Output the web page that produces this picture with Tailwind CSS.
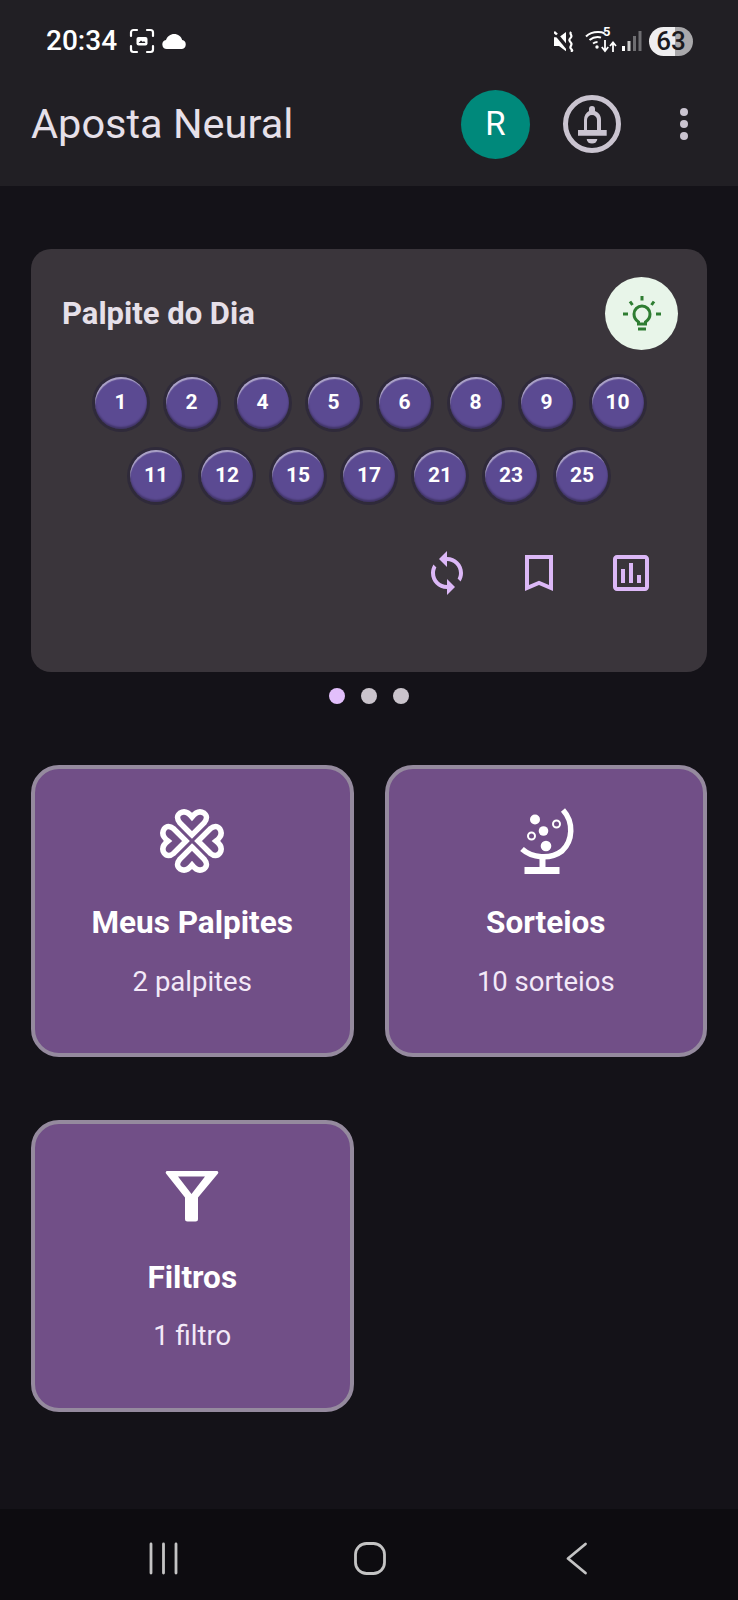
<!DOCTYPE html>
<html lang="pt">
<head>
<meta charset="utf-8">
<script src="https://cdn.jsdelivr.net/npm/@tailwindcss/browser@4"></script>
<title>Aposta Neural</title>
</head>
<body class="bg-[#141218]">
<div class="w-[738px] h-[1600px] flex flex-col font-['Roboto',sans-serif] overflow-hidden bg-[#141218]">

  <header class="h-[186px] bg-[#211f24] shrink-0 flex flex-col">
    <div class="h-[62px] pt-[20px] flex items-center pl-[46px] pr-[45px] text-white">
      <span class="text-[28px] font-medium leading-none">20:34</span>
      <svg class="ml-[12px]" width="26" height="26" viewBox="0 0 26 26" fill="none" stroke="#fff" stroke-width="2.2" stroke-linecap="round">
        <path d="M2 8V4.500A2.500 2.500 0 0 1 4.500 2H8M18 2h3.500A2.500 2.500 0 0 1 24 4.500V8M24 18v3.500a2.500 2.500 0 0 1-2.500 2.500H18M8 24H4.500A2.500 2.500 0 0 1 2 21.500V18"/>
        <rect x="7.500" y="9" width="11" height="8.500" rx="2" fill="#fff" stroke="none"/>
        <path d="M9.500 15l2.500-2.500 2 1.500 1-1 1.500 2z" fill="#211f24" stroke="none"/>
      </svg>
      <svg class="ml-[7px]" width="25" height="15" viewBox="0 0 25 15" fill="#fff"><path d="M5 15a4.600 4.600 0 0 1-1-9.100C5.200 2.500 8.400 0 12.200 0c3.800 0 7 2.500 8 6a4.600 4.600 0 0 1-.2 9z"/></svg>
      <div class="ml-auto flex items-center">
        <svg width="21" height="21" viewBox="0 0 21 24" preserveAspectRatio="none" fill="#fff">
          <path d="M0 7h5l7-6v22l-7-6H0z"/>
          <path d="M1 2l13 18" stroke="#211f24" stroke-width="3.500"/>
          <path d="M0 1l3 3" stroke="#fff" stroke-width="2.500"/>
          <path d="M17 1c-2 2.500 2 4-.2 6.500S15 11 17 13.500s-2 4-.2 6.500 2 2.500 0 3.500" fill="none" stroke="#fff" stroke-width="2.200"/>
        </svg>
        <div class="relative ml-[10px] w-[32px] h-[26px]">
          <svg class="absolute left-0 top-[2px]" width="23" height="20" viewBox="0 0 23 20" fill="none" stroke="#fff" stroke-width="2">
            <path d="M1 6.500C4 3.500 8 2 13 2c3 0 5 .500 6.500 1.300"/>
            <path d="M4.500 10C7 8 9.500 7 12.500 7c1.500 0 2.500.200 3.500.600"/>
            <path d="M8 13.500c1.500-1 3-1.500 4.500-1.500"/>
            <circle cx="12" cy="17" r="1.700" fill="#fff" stroke="none"/>
          </svg>
          <span class="absolute left-[18px] top-[-3px] text-[13px] font-bold leading-[14px] text-white">5</span>
          <svg class="absolute left-[15px] top-[12px]" width="17" height="13" viewBox="0 0 17 13" fill="none" stroke="#fff" stroke-width="1.800">
            <path d="M5 0v10M1.800 7l3.200 4 3.200-4"/><path d="M13 12V3M10 6l3-3.500 3 3.500"/>
          </svg>
        </div>
        <svg class="ml-[5px]" width="20" height="20" viewBox="0 0 20 20">
          <rect x="0" y="15" width="3" height="5" fill="#fff"/>
          <rect x="5.500" y="10" width="3" height="10" fill="#c9c9c9"/>
          <rect x="11" y="5" width="3" height="15" fill="#6f6e72"/>
          <rect x="16.500" y="0" width="3" height="20" fill="#6f6e72"/>
        </svg>
        <div class="ml-[7px] w-[44px] h-[29px] rounded-full bg-[linear-gradient(90deg,#efeef0_59%,#a9a8ab_59%)] flex items-center justify-center text-[26px] font-medium text-[#1b1a1e] leading-none">63</div>
      </div>
    </div>
    <div class="flex-1 flex items-center pl-[31px] pr-[50px]">
      <h1 class="text-[41.500px] font-normal leading-none text-[#e6e0e9]">Aposta Neural</h1>
      <div class="ml-auto w-[69px] h-[69px] rounded-full bg-[#00897b] flex items-center justify-center text-[33px] text-white">R</div>
      <div class="ml-[33px] w-[58px] h-[58px] rounded-full border-[5px] border-[#cac4d0] flex items-center justify-center">
        <svg width="48" height="48" viewBox="0 0 48 48" fill="#cac4d0"><path fill-rule="evenodd" d="M24 6a3 3 0 0 1 3 3v2c4 1.500 6 5 6 9v10h5.700v5.700H10V30h6V20c0-4 2-7.500 5-9V9a3 3 0 0 1 3-3zM19 30h10V20a5 5 0 0 0-10 0z"/><path d="M18.700 39h10.600a5.300 4.500 0 0 1-10.600 0z"/></svg>
      </div>
      <div class="ml-[59px] flex flex-col gap-[4px]">
        <span class="w-[8px] h-[8px] rounded-full bg-[#cac4d0]"></span>
        <span class="w-[8px] h-[8px] rounded-full bg-[#cac4d0]"></span>
        <span class="w-[8px] h-[8px] rounded-full bg-[#cac4d0]"></span>
      </div>
    </div>
  </header>

  <main class="flex-1 pt-[63px] px-[31px]">
    <section class="h-[423px] rounded-[20px] bg-[#3a353b] pt-[28px] pl-[31px] pr-[29px]">
      <div class="flex items-center justify-between h-[73px]">
        <h2 class="text-[31px] font-bold leading-none text-[#e6e0e9] -mt-[1px]">Palpite do Dia</h2>
        <div class="w-[73px] h-[73px] rounded-full bg-[#e8f5e9] flex items-center justify-center">
          <svg width="40" height="40" viewBox="0 0 40 40" fill="none" stroke="#2e7d32" stroke-width="3">
            <path d="M16.500 30v-2C13.500 26 12 23.500 12 20a8 8 0 1 1 16 0c0 3.500-1.500 6-4.500 8v2z"/>
            <path d="M16 35h8"/>
            <path d="M20 2v4.500M1 20h5M34 20h5M8 7.500l2.500 3.500M32 7.500L29.500 11"/>
          </svg>
        </div>
      </div>
      <div class="mt-[27px] flex flex-wrap justify-center gap-x-[19px] gap-y-[21px] pr-[2px]">
        <div class="w-[52px] h-[52px] rounded-full bg-[#5b4a92] flex items-center justify-center text-[21px] font-bold text-white shadow-[inset_1px_3px_1px_-1px_rgba(255,255,255,0.5),inset_0_-2px_2px_rgba(0,0,0,0.3),0_0_0_3px_#2f2a3a]">1</div>
        <div class="w-[52px] h-[52px] rounded-full bg-[#5b4a92] flex items-center justify-center text-[21px] font-bold text-white shadow-[inset_1px_3px_1px_-1px_rgba(255,255,255,0.5),inset_0_-2px_2px_rgba(0,0,0,0.3),0_0_0_3px_#2f2a3a]">2</div>
        <div class="w-[52px] h-[52px] rounded-full bg-[#5b4a92] flex items-center justify-center text-[21px] font-bold text-white shadow-[inset_1px_3px_1px_-1px_rgba(255,255,255,0.5),inset_0_-2px_2px_rgba(0,0,0,0.3),0_0_0_3px_#2f2a3a]">4</div>
        <div class="w-[52px] h-[52px] rounded-full bg-[#5b4a92] flex items-center justify-center text-[21px] font-bold text-white shadow-[inset_1px_3px_1px_-1px_rgba(255,255,255,0.5),inset_0_-2px_2px_rgba(0,0,0,0.3),0_0_0_3px_#2f2a3a]">5</div>
        <div class="w-[52px] h-[52px] rounded-full bg-[#5b4a92] flex items-center justify-center text-[21px] font-bold text-white shadow-[inset_1px_3px_1px_-1px_rgba(255,255,255,0.5),inset_0_-2px_2px_rgba(0,0,0,0.3),0_0_0_3px_#2f2a3a]">6</div>
        <div class="w-[52px] h-[52px] rounded-full bg-[#5b4a92] flex items-center justify-center text-[21px] font-bold text-white shadow-[inset_1px_3px_1px_-1px_rgba(255,255,255,0.5),inset_0_-2px_2px_rgba(0,0,0,0.3),0_0_0_3px_#2f2a3a]">8</div>
        <div class="w-[52px] h-[52px] rounded-full bg-[#5b4a92] flex items-center justify-center text-[21px] font-bold text-white shadow-[inset_1px_3px_1px_-1px_rgba(255,255,255,0.5),inset_0_-2px_2px_rgba(0,0,0,0.3),0_0_0_3px_#2f2a3a]">9</div>
        <div class="w-[52px] h-[52px] rounded-full bg-[#5b4a92] flex items-center justify-center text-[21px] font-bold text-white shadow-[inset_1px_3px_1px_-1px_rgba(255,255,255,0.5),inset_0_-2px_2px_rgba(0,0,0,0.3),0_0_0_3px_#2f2a3a]">10</div>
        <div class="w-[52px] h-[52px] rounded-full bg-[#5b4a92] flex items-center justify-center text-[21px] font-bold text-white shadow-[inset_1px_3px_1px_-1px_rgba(255,255,255,0.5),inset_0_-2px_2px_rgba(0,0,0,0.3),0_0_0_3px_#2f2a3a]">11</div>
        <div class="w-[52px] h-[52px] rounded-full bg-[#5b4a92] flex items-center justify-center text-[21px] font-bold text-white shadow-[inset_1px_3px_1px_-1px_rgba(255,255,255,0.5),inset_0_-2px_2px_rgba(0,0,0,0.3),0_0_0_3px_#2f2a3a]">12</div>
        <div class="w-[52px] h-[52px] rounded-full bg-[#5b4a92] flex items-center justify-center text-[21px] font-bold text-white shadow-[inset_1px_3px_1px_-1px_rgba(255,255,255,0.5),inset_0_-2px_2px_rgba(0,0,0,0.3),0_0_0_3px_#2f2a3a]">15</div>
        <div class="w-[52px] h-[52px] rounded-full bg-[#5b4a92] flex items-center justify-center text-[21px] font-bold text-white shadow-[inset_1px_3px_1px_-1px_rgba(255,255,255,0.5),inset_0_-2px_2px_rgba(0,0,0,0.3),0_0_0_3px_#2f2a3a]">17</div>
        <div class="w-[52px] h-[52px] rounded-full bg-[#5b4a92] flex items-center justify-center text-[21px] font-bold text-white shadow-[inset_1px_3px_1px_-1px_rgba(255,255,255,0.5),inset_0_-2px_2px_rgba(0,0,0,0.3),0_0_0_3px_#2f2a3a]">21</div>
        <div class="w-[52px] h-[52px] rounded-full bg-[#5b4a92] flex items-center justify-center text-[21px] font-bold text-white shadow-[inset_1px_3px_1px_-1px_rgba(255,255,255,0.5),inset_0_-2px_2px_rgba(0,0,0,0.3),0_0_0_3px_#2f2a3a]">23</div>
        <div class="w-[52px] h-[52px] rounded-full bg-[#5b4a92] flex items-center justify-center text-[21px] font-bold text-white shadow-[inset_1px_3px_1px_-1px_rgba(255,255,255,0.5),inset_0_-2px_2px_rgba(0,0,0,0.3),0_0_0_3px_#2f2a3a]">25</div>
      </div>
      <div class="mt-[47px] flex justify-end gap-[44px] pr-[23px]">
        <svg width="48" height="48" viewBox="0 0 24 24" fill="#dcb8f7"><path d="M12 4V1L8 5l4 4V6c3.310 0 6 2.690 6 6 0 1.010-.250 1.970-.700 2.800l1.460 1.460C19.540 15.030 20 13.570 20 12c0-4.420-3.580-8-8-8zm0 14c-3.310 0-6-2.690-6-6 0-1.010.250-1.970.700-2.800L5.240 7.740C4.460 8.970 4 10.430 4 12c0 4.420 3.580 8 8 8v3l4-4-4-4v3z"/></svg>
        <svg width="48" height="48" viewBox="0 0 24 24" fill="#dcb8f7"><path d="M5 3h14v18l-7-3-7 3zm2 2v13l5-2.180L17 18V5z" fill-rule="evenodd"/></svg>
        <svg width="48" height="48" viewBox="0 0 24 24" fill="#dcb8f7"><path d="M9 17H7v-7h2v7zm4 0h-2V7h2v10zm4 0h-2v-4h2v4zm2 2H5V5h14v14zm0-16H5c-1.100 0-2 .900-2 2v14c0 1.100.900 2 2 2h14c1.100 0 2-.900 2-2V5c0-1.100-.900-2-2-2z"/></svg>
      </div>
    </section>

    <div class="mt-[16px] flex justify-center gap-[16px]">
      <span class="w-[16px] h-[16px] rounded-full bg-[#e2bffb]"></span>
      <span class="w-[16px] h-[16px] rounded-full bg-[#cac4cc]"></span>
      <span class="w-[16px] h-[16px] rounded-full bg-[#cac4cc]"></span>
    </div>

    <div class="mt-[61px] grid grid-cols-2 gap-x-[31px] gap-y-[63px]">
      <article class="h-[292px] rounded-[28px] border-[4px] border-[#958a9e] bg-[#714f87] flex flex-col items-center pt-[39px] text-white">
        <svg class="-my-[2px]" width="70" height="70" viewBox="0 0 64 64" fill="none" stroke="#fff" stroke-width="5">
          <path d="M32 26.500 21 15.500Q16.500 10 21 6.500 26.500 3 32 10 37.500 3 43 6.500 47.500 10 43 15.500Z"/>
          <path transform="rotate(90 32 32)" d="M32 26.500 21 15.500Q16.500 10 21 6.500 26.500 3 32 10 37.500 3 43 6.500 47.500 10 43 15.500Z"/>
          <path transform="rotate(180 32 32)" d="M32 26.500 21 15.500Q16.500 10 21 6.500 26.500 3 32 10 37.500 3 43 6.500 47.500 10 43 15.500Z"/>
          <path transform="rotate(270 32 32)" d="M32 26.500 21 15.500Q16.500 10 21 6.500 26.500 3 32 10 37.500 3 43 6.500 47.500 10 43 15.500Z"/>
        </svg>
        <h3 class="mt-[32px] text-[31.500px] font-bold leading-[34px]">Meus Palpites</h3>
        <p class="mt-[26px] text-[27.500px] font-normal leading-[32px] text-[#f3e9f8]">2 palpites</p>
      </article>

      <article class="h-[292px] rounded-[28px] border-[4px] border-[#958a9e] bg-[#714f87] flex flex-col items-center pt-[39px] text-white">
        <svg class="-ml-[2px]" width="66" height="66" viewBox="0 0 66 66" fill="#fff">
          <path d="M51 2C62 14 61 33 50 43 38 52 20 50 10 41" fill="none" stroke="#fff" stroke-width="5.500"/>
          <rect x="27.500" y="48" width="6" height="12"/>
          <rect x="12.500" y="59" width="35" height="7"/>
          <circle cx="23" cy="11.500" r="5"/>
          <circle cx="31.500" cy="23" r="4.800"/>
          <circle cx="34" cy="38" r="5.300"/>
          <circle cx="44.500" cy="16" r="3.500" fill="none" stroke="#fff" stroke-width="2"/>
          <circle cx="19.500" cy="28" r="3.500" fill="none" stroke="#fff" stroke-width="2"/>
        </svg>
        <h3 class="mt-[32px] text-[31.500px] font-bold leading-[34px]">Sorteios</h3>
        <p class="mt-[26px] text-[27.500px] font-normal leading-[32px] text-[#f3e9f8]">10 sorteios</p>
      </article>

      <article class="h-[292px] rounded-[28px] border-[4px] border-[#958a9e] bg-[#714f87] flex flex-col items-center pt-[39px] text-white">
        <svg width="66" height="66" viewBox="0 0 66 66" fill="#fff"><path fill-rule="evenodd" d="M8 8h50a1.500 1.500 0 0 1 1 2.400L39 34.500V56a2.500 2.500 0 0 1-2.500 2.500h-8A2.500 2.500 0 0 1 26 56V34.500L7 10.400A1.500 1.500 0 0 1 8 8zM19 13.500l13.500 17.500L46 13.500z"/></svg>
        <h3 class="mt-[32px] text-[31.500px] font-bold leading-[34px]">Filtros</h3>
        <p class="mt-[25px] text-[27.500px] font-normal leading-[32px] text-[#f3e9f8]">1 filtro</p>
      </article>
    </div>
  </main>

  <nav class="h-[91px] shrink-0 bg-[#0d0c10] flex items-center justify-center">
    <svg width="738" height="91" viewBox="0 1509 738 91" fill="none" stroke="#c4c4c4" stroke-width="2.800" stroke-linecap="round" stroke-linejoin="round">
      <path d="M151 1544v29M163.500 1544v29M176 1544v29"/>
      <rect x="355.500" y="1543.500" width="29" height="30" rx="11"/>
      <path d="M585.500 1544 568 1558.500l17.500 14.500"/>
    </svg>
  </nav>
</div>
</body>
</html>
